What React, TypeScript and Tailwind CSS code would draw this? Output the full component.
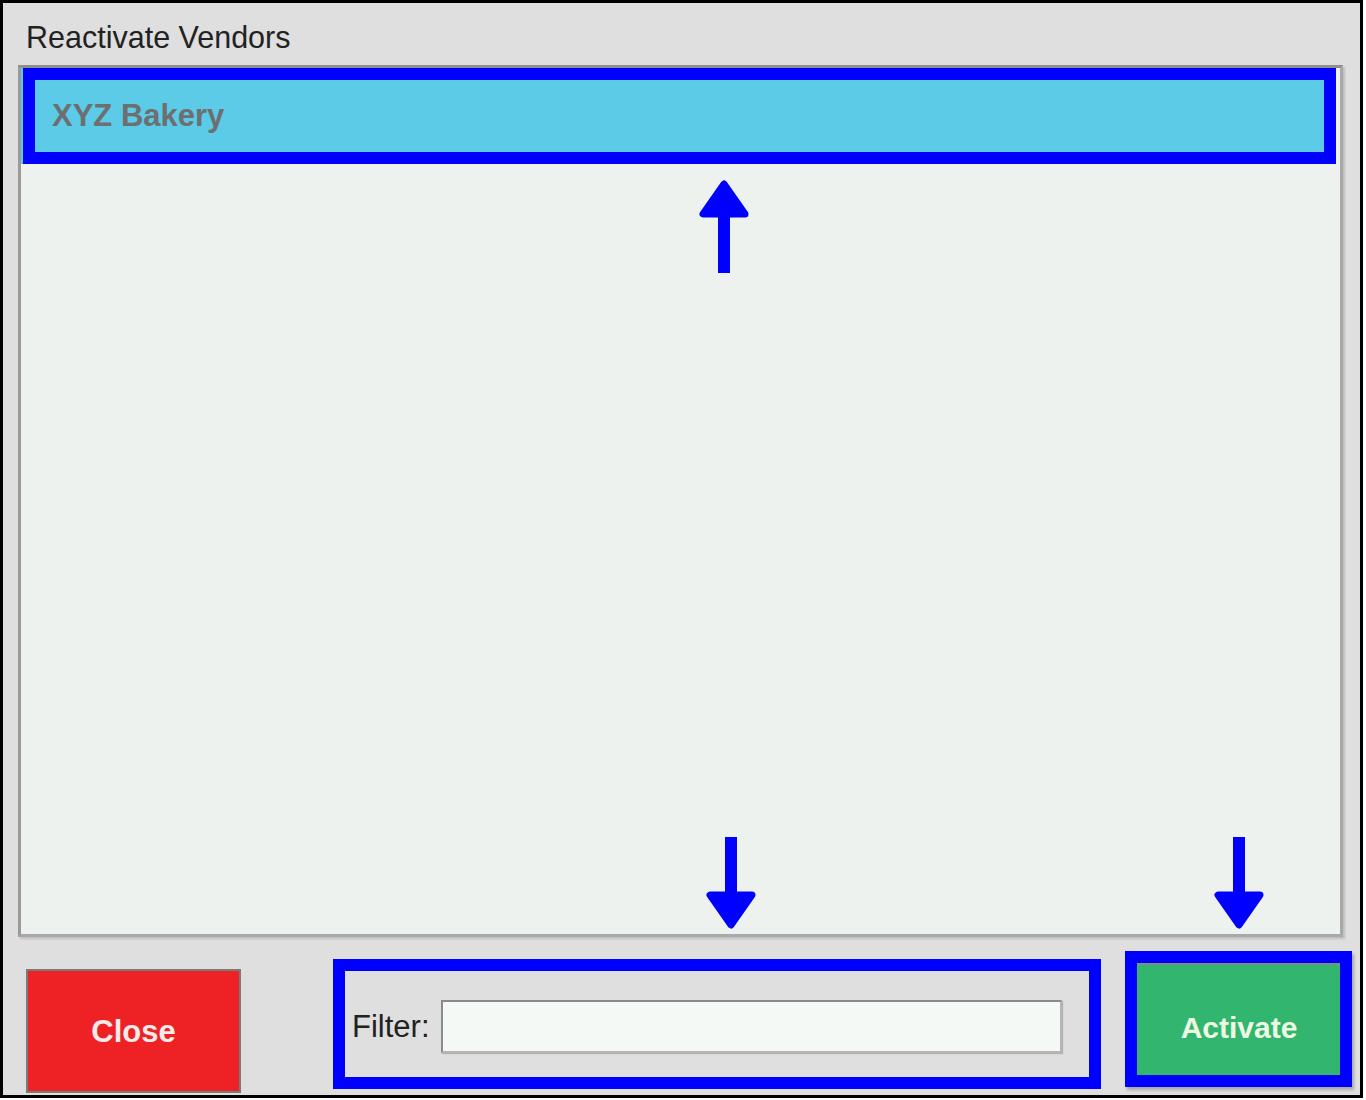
import React from "react";

function UpArrow({ className }: { className: string }) {
  return (
    <svg className={className} width="50" height="93" viewBox="0 0 50 93">
      <polygon points="25,4 4,34 46,34" fill="#0000ff" stroke="#0000ff" strokeWidth="7" strokeLinejoin="round" />
      <rect x="19" y="34" width="12" height="59" fill="#0000ff" />
    </svg>
  );
}

function DownArrow({ className }: { className: string }) {
  return (
    <svg className={className} width="50" height="92" viewBox="0 0 50 92">
      <rect x="19" y="0" width="12" height="58" fill="#0000ff" />
      <polygon points="4,58 46,58 25,88" fill="#0000ff" stroke="#0000ff" strokeWidth="7" strokeLinejoin="round" />
    </svg>
  );
}

export default function App() {
  return (
    <div className="bg-white w-[1366px] h-[1100px]" style={{ fontFamily: '"Liberation Sans", Arial, sans-serif' }}>
      <div className="relative w-[1363px] h-[1098px] border-[3px] border-black bg-[#dfdfdf] flex flex-col">
        {/* Title */}
        <div className="h-[62px] pl-[23px] pt-[19px]">
          <div className="text-[30.5px] leading-[30px] text-[#222]">Reactivate Vendors</div>
        </div>

        {/* List */}
        <div className="ml-[15px] w-[1325px] h-[872px] border-[3px] border-t-[#8f8f8f] border-l-[#9a9a9a] border-r-[#a9a9a9] border-b-[#a9a9a9] bg-[#eef2ef] shadow-[2px_2px_2px_rgba(0,0,0,0.15)]">
          <div className="relative mr-[4px] h-[96px] bg-[#5bcbe8] flex items-center pl-[31px]">
            <span className="text-[31px] font-bold text-[#6d6f70]">XYZ Bakery</span>
            <div className="absolute top-0 bottom-0 left-[2px] right-0 border-[12px] border-[#0000ff]" />
          </div>
        </div>

        {/* Bottom row */}
        <div className="flex items-start">
          <button className="ml-[23px] mt-[32px] w-[215px] h-[124px] bg-[#ee2225] border-2 border-[#7a7a7a] pt-[3px] text-[31px] font-bold text-[#fdeaea] flex items-center justify-center">
            Close
          </button>

          <div className="ml-[92px] mt-[22px] w-[768px] h-[130px] border-[12px] border-[#0000ff] pl-[7px] pt-[29px]">
            <div className="flex items-center">
              <span className="text-[31px] leading-[53px] text-[#222] w-[89px]">Filter:</span>
              <div className="w-[621px] h-[53px] bg-[#f5f9f6] border-2 border-t-[#8a8a8a] border-l-[#8a8a8a] border-r-[#b5b5b5] border-b-[#b5b5b5] shadow-[1px_1px_1px_rgba(0,0,0,0.2)]" />
            </div>
          </div>

          <div className="relative ml-[36px] mt-[26px] w-[204px] h-[124px]">
            <button className="w-full h-full bg-[#32b66f] border-t-2 border-[#7d8f82] pt-[3px] text-[30px] font-bold text-[#eef9e4] flex items-center justify-center">
              Activate
            </button>
            <div className="absolute left-[-12px] right-[-11px] top-[-12px] bottom-0 border-[12px] border-[#0000ff] shadow-[2px_3px_3px_rgba(0,0,0,0.25)]" />
          </div>
        </div>

        {/* Annotation arrows */}
        <UpArrow className="absolute left-[696px] top-[177px]" />
        <DownArrow className="absolute left-[703px] top-[834px]" />
        <DownArrow className="absolute left-[1211px] top-[834px]" />
      </div>
    </div>
  );
}
